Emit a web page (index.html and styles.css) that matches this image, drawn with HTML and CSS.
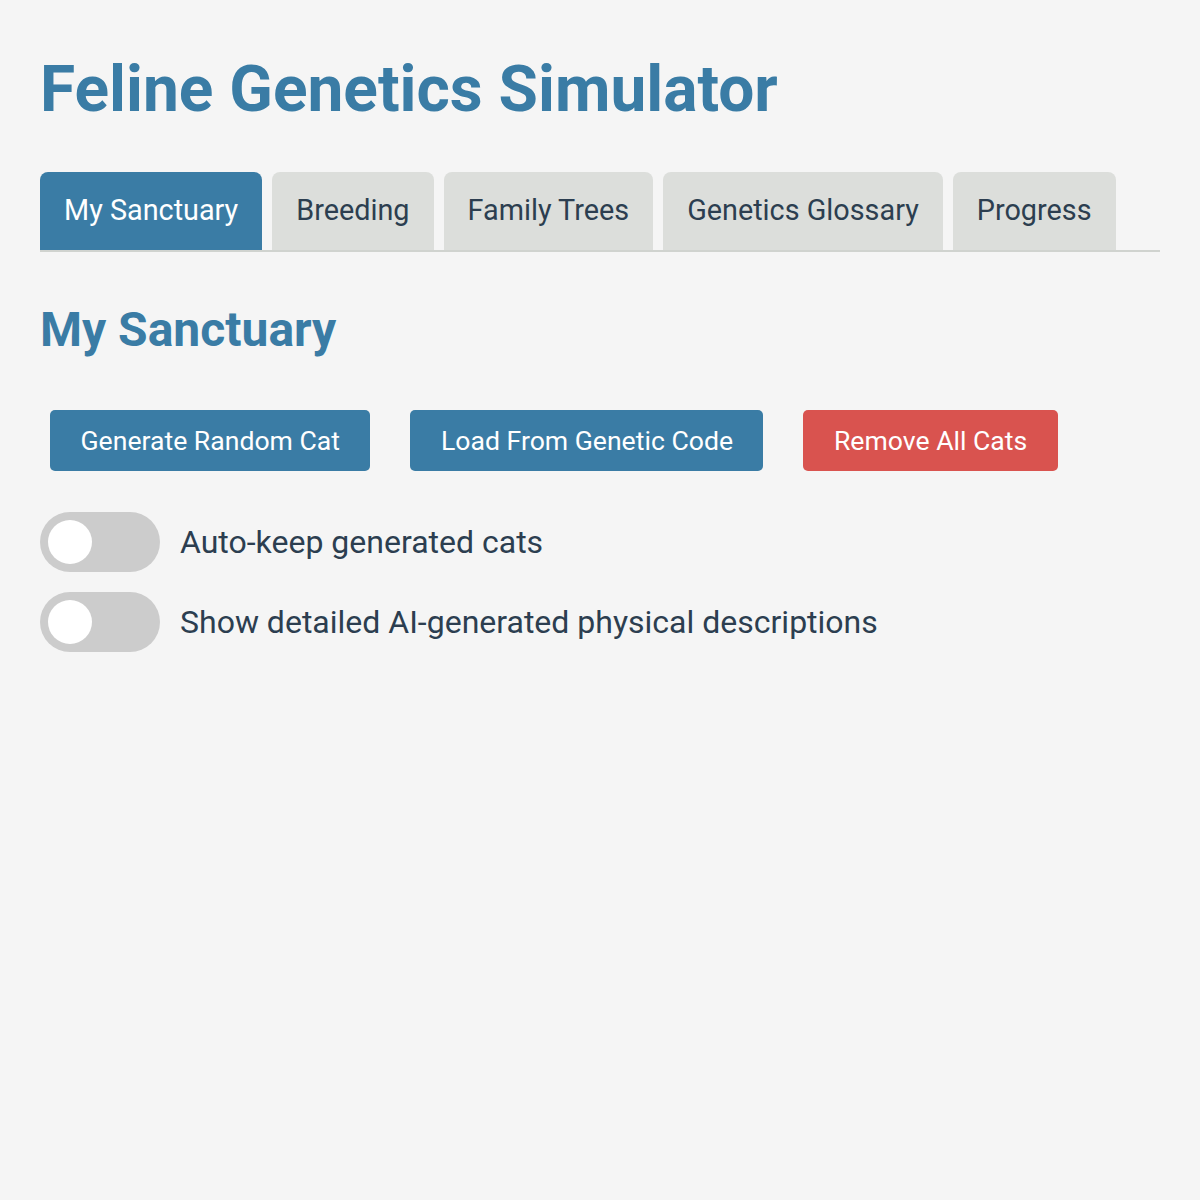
FILE: index.html
```html
<!DOCTYPE html>
<html>
<head>
<meta charset="utf-8">
<link rel="stylesheet" href="styles.css">
</head>
<body>
<div class="app">
  <h1 class="title">Feline Genetics Simulator</h1>
  <nav class="tabs">
    <button class="tab active">My Sanctuary</button>
    <button class="tab">Breeding</button>
    <button class="tab">Family Trees</button>
    <button class="tab">Genetics Glossary</button>
    <button class="tab">Progress</button>
  </nav>
  <section class="panel">
    <h2 class="section-title">My Sanctuary</h2>
    <div class="actions">
      <button class="btn">Generate Random Cat</button>
      <button class="btn">Load From Genetic Code</button>
      <button class="btn danger">Remove All Cats</button>
    </div>
    <div class="toggles">
      <label class="toggle-row">
        <span class="switch"><span class="knob"></span></span>
        <span class="toggle-label">Auto-keep generated cats</span>
      </label>
      <label class="toggle-row">
        <span class="switch"><span class="knob"></span></span>
        <span class="toggle-label">Show detailed AI-generated physical descriptions</span>
      </label>
    </div>
  </section>
</div>
</body>
</html>
```

FILE: styles.css
```css
* { box-sizing: border-box; }
html, body { margin: 0; padding: 0; }
body {
  background: #f5f5f5;
  font-family: Roboto, "Noto Sans", sans-serif;
  color: #2c3e50;
}
.app {
  padding: 40px;
}
.title {
  margin: 0;
  padding-top: 10px;
  font-size: 64px;
  font-weight: 700;
  color: #3a7ca5;
  line-height: 80px;
}
.tabs {
  display: flex;
  gap: 10px;
  margin-top: 42px;
  border-bottom: 2px solid #d0d3cf;
}
.tab {
  font-family: Roboto, sans-serif;
  font-size: 28.8px;
  border: none;
  border-radius: 8px 8px 0 0;
  background: #dcdedb;
  color: #2c3e50;
  padding: 0 24px 2px;
  height: 78px;
  cursor: pointer;
}
.tab.active {
  background: #3a7ca5;
  color: #ffffff;
}
.section-title {
  margin: 48px 0 0;
  font-size: 48px;
  line-height: 60px;
  font-weight: 700;
  color: #3a7ca5;
}
.actions {
  display: flex;
  gap: 40px;
  margin-top: 50px;
  padding-left: 10px;
}
.btn {
  font-family: Roboto, sans-serif;
  font-size: 26.6px;
  height: 61px;
  padding: 0 30.5px;
  border: none;
  border-radius: 5px;
  background: #3a7ca5;
  color: #ffffff;
  cursor: pointer;
}
.btn.danger {
  background: #d9534f;
}
.toggles {
  display: flex;
  flex-direction: column;
  gap: 20px;
  margin-top: 41px;
}
.toggle-row {
  display: flex;
  align-items: center;
  gap: 20px;
}
.switch {
  width: 120px;
  height: 60px;
  border-radius: 30px;
  background: #cccccc;
  display: flex;
  align-items: center;
  padding-left: 8px;
}
.knob {
  width: 44px;
  height: 44px;
  border-radius: 50%;
  background: #ffffff;
}
.toggle-label {
  font-size: 32px;
  color: #2c3e50;
}
```
